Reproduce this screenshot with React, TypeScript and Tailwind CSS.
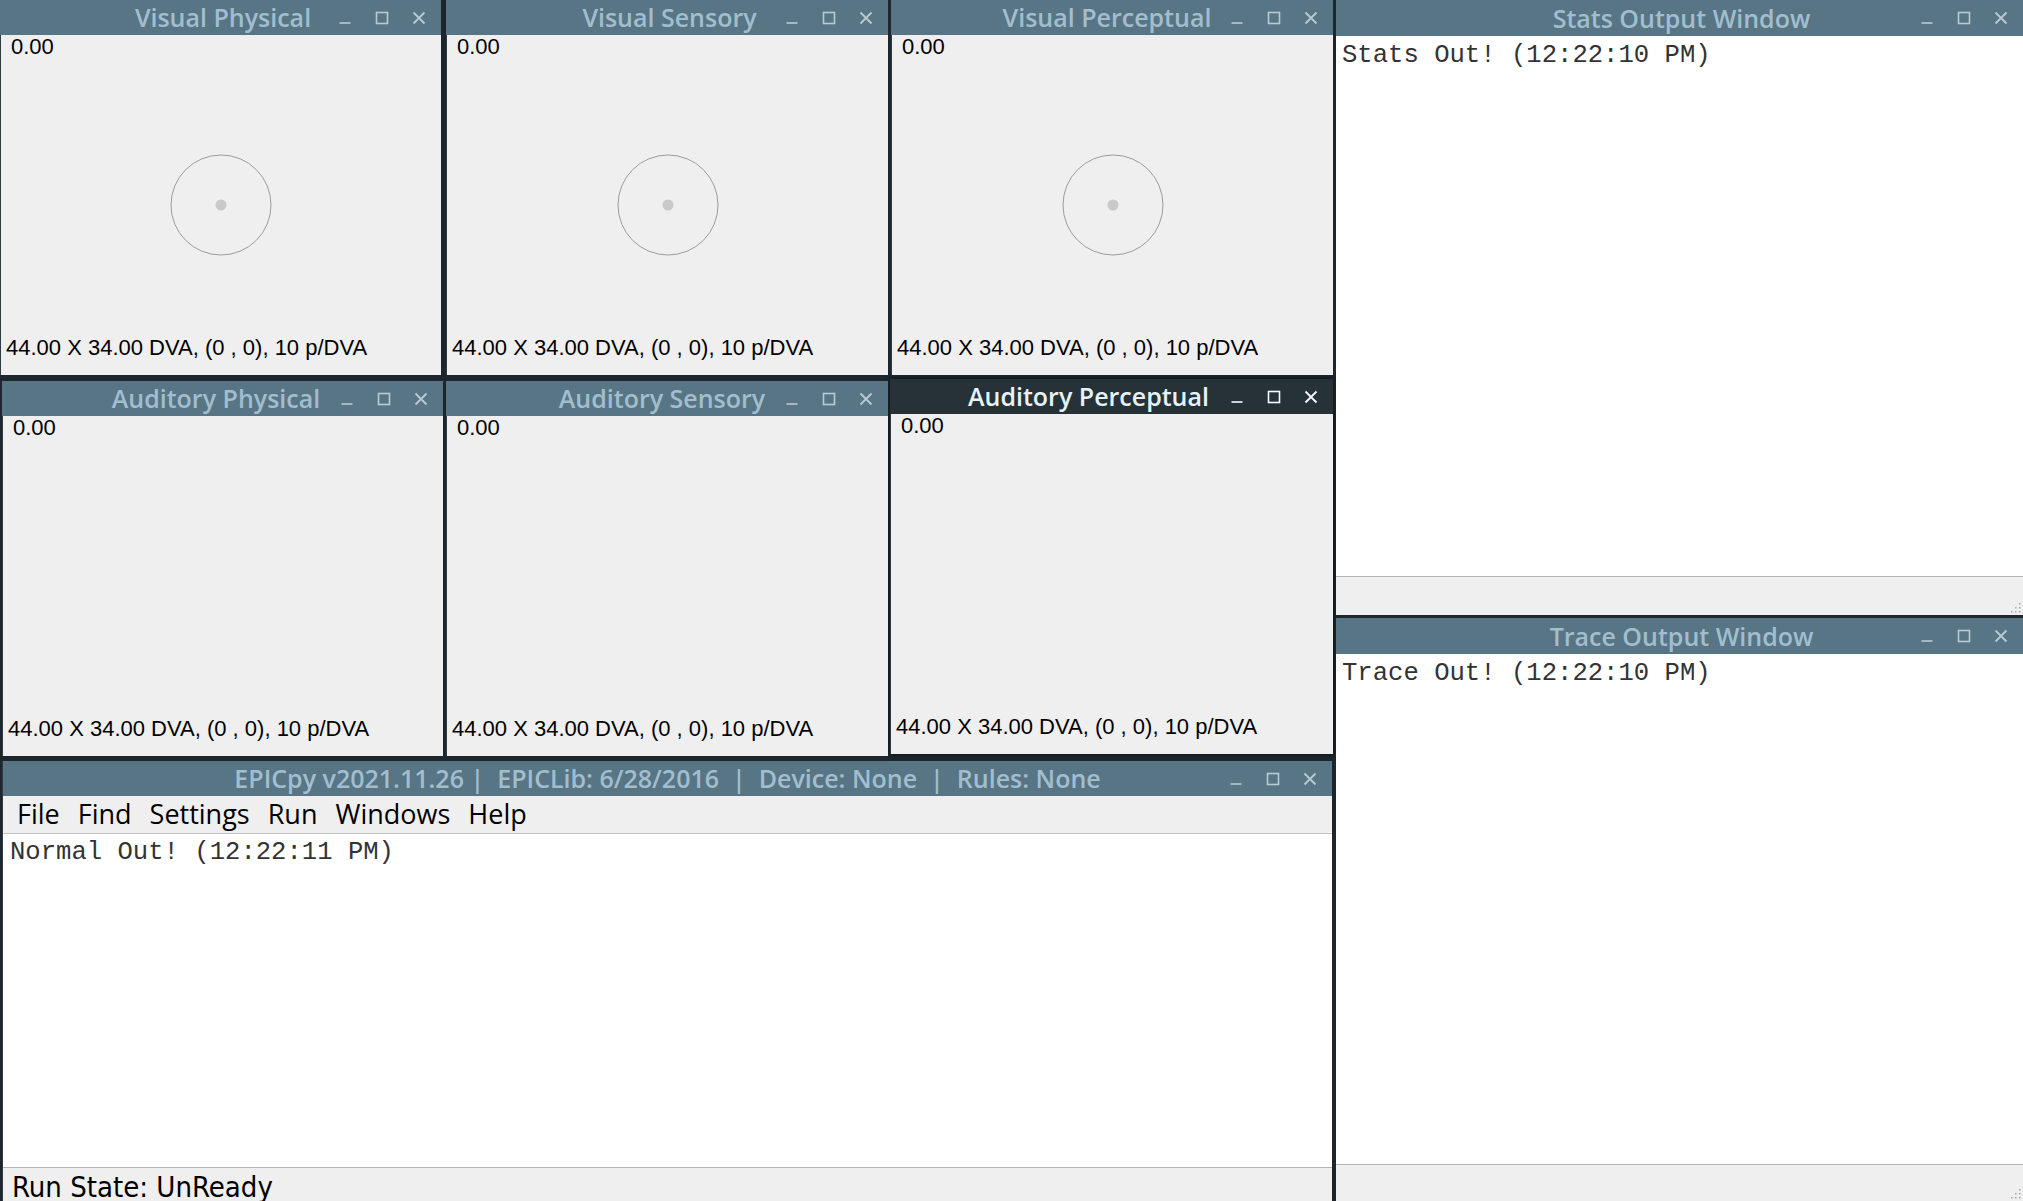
import React from "react";

function TitleButtons({ active }: { active?: boolean }) {
  const c = active ? "#f4fbff" : "#b8cbd5";
  return (
    <div className="absolute right-0 top-0 h-full flex items-center gap-[23px] pr-[15px]">
      <svg width="14" height="14" viewBox="0 0 14 14">
        <line x1="1.5" y1="12" x2="12.5" y2="12" stroke={c} strokeWidth="1.6" />
      </svg>
      <svg width="14" height="14" viewBox="0 0 14 14">
        <rect x="1.5" y="1.5" width="11" height="11" fill="none" stroke={c} strokeWidth="1.6" />
      </svg>
      <svg width="14" height="14" viewBox="0 0 14 14">
        <path d="M1.5 1.5 L12.5 12.5 M12.5 1.5 L1.5 12.5" stroke={c} strokeWidth="1.8" />
      </svg>
    </div>
  );
}

function TitleBar({
  title,
  active,
  h = "h-[35px]",
  shift = "",
}: {
  title: string;
  active?: boolean;
  h?: string;
  shift?: string;
}) {
  return (
    <div
      className={`relative ${h} shrink-0 flex items-center justify-center ${
        active ? "bg-[#263238] text-[#e6f3fb]" : "bg-[#587585] text-[#a2bece]"
      } font-['Open_Sans',sans-serif] font-semibold text-[25px] leading-none whitespace-pre`}
    >
      <span className={shift}>{title}</span>
      <TitleButtons active={active} />
    </div>
  );
}

function Grip() {
  return (
    <svg width="12" height="12" viewBox="0 0 12 12" className="absolute right-[2px] bottom-[2px]">
      {[
        [10, 2],
        [10, 6],
        [6, 6],
        [10, 10],
        [6, 10],
        [2, 10],
      ].map(([x, y], i) => (
        <rect key={i} x={x} y={y} width="1.5" height="1.5" fill="#a8a8a8" />
      ))}
    </svg>
  );
}

function ViewWindow({
  title,
  active,
  circle,
  className,
  shift,
}: {
  title: string;
  active?: boolean;
  circle?: boolean;
  className: string;
  shift?: string;
}) {
  return (
    <div className={`flex flex-col ${className} ${active ? "shadow-[0_0_6px_rgba(0,0,0,0.6)]" : ""}`}>
      <TitleBar title={title} active={active} shift={shift} />
      <div className="relative flex-1 bg-[#efefef] flex flex-col justify-between font-['Liberation_Sans',Arial,sans-serif] text-black border-l border-[#2f3c44]">
        <div className="pl-[10px] text-[22px] leading-[24px]">0.00</div>
        {circle && (
          <div className="absolute inset-0 flex items-center justify-center">
            <svg width="102" height="102" viewBox="0 0 102 102">
              <circle cx="51" cy="51" r="50" fill="none" stroke="#9c9c9c" strokeWidth="1" />
              <circle cx="51" cy="51" r="5.5" fill="#c9c9c9" />
            </svg>
          </div>
        )}
        <div className="pl-[5px] pb-[15px] text-[22px] leading-[24px] whitespace-pre">
          44.00 X 34.00 DVA, (0 , 0), 10 p/DVA
        </div>
      </div>
    </div>
  );
}

function OutputWindow({
  title,
  text,
  className,
  grayH,
}: {
  title: string;
  text: string;
  className: string;
  grayH: string;
}) {
  return (
    <div className={`flex flex-col ${className}`}>
      <TitleBar title={title} h="h-[36px]" shift="ml-[4px]" />
      <div className="flex-1 bg-white border-b border-[#b4b4b4] font-['Liberation_Mono','Courier_New',monospace] text-[25.6px] leading-[30px] text-[#333333] pl-[6px] pt-[5px] whitespace-pre">
        {text}
      </div>
      <div className={`relative ${grayH} shrink-0 bg-[#efefef]`}>
        <Grip />
      </div>
    </div>
  );
}

export default function App() {
  return (
    <div className="w-[2023px] h-[1201px] bg-[#1c262c] flex overflow-hidden">
      {/* Left column */}
      <div className="w-[1333px] shrink-0 flex flex-col">
        <div className="h-[375px] flex gap-0">
          <ViewWindow title="Visual Physical" circle className="w-[441px]" shift="ml-[5px]" />
          <div className="w-[5px]" />
          <ViewWindow title="Visual Sensory" circle className="w-[442px]" shift="ml-[5px]" />
          <div className="w-[3px]" />
          <ViewWindow title="Visual Perceptual" circle className="w-[442px]" shift="mr-[10px]" />
        </div>
        <div className="h-[381px] flex items-end">
          <div className="w-[2px]" />
          <ViewWindow title="Auditory Physical" className="w-[441px] h-[375px]" shift="mr-[13px]" />
          <div className="w-[3px]" />
          <ViewWindow title="Auditory Sensory" className="w-[442px] h-[375px]" shift="mr-[10px]" />
          <div className="w-[2px]" />
          <ViewWindow
            title="Auditory Perceptual"
            active
            className="w-[443px] h-[375px] mb-[2px]"
            shift="mr-[46px]"
          />
        </div>
        {/* Main window */}
        <div className="mt-[5px] ml-[2px] w-[1330px] flex-1 flex flex-col border-l border-[#2f3c44]">
          <TitleBar title={"EPICpy v2021.11.26 |  EPICLib: 6/28/2016  |  Device: None  |  Rules: None"} />
          <div className="h-[38px] shrink-0 bg-[#efefef] border-b border-[#c4c4c4] flex items-center gap-[18px] pl-[14px] font-['Open_Sans',sans-serif] text-[27px] text-black">
            <span>File</span>
            <span>Find</span>
            <span>Settings</span>
            <span>Run</span>
            <span>Windows</span>
            <span>Help</span>
          </div>
          <div className="flex-1 bg-white border-b border-[#b4b4b4] font-['Liberation_Mono','Courier_New',monospace] text-[25.6px] leading-[30px] text-[#333333] pl-[7px] pt-[4px] whitespace-pre">
            Normal Out! (12:22:11 PM)
          </div>
          <div className="relative h-[33px] shrink-0 bg-[#efefef] overflow-hidden">
            <div className="pl-[9px] pt-[2px] font-['DejaVu_Sans_Condensed','Liberation_Sans_Narrow','DejaVu_Sans',sans-serif] [font-stretch:condensed] text-[29px] leading-[34px] text-black whitespace-pre">
              Run State: UnReady
            </div>
          </div>
        </div>
      </div>
      {/* Right column */}
      <div className="ml-[3px] flex-1 flex flex-col">
        <OutputWindow
          title="Stats Output Window"
          text="Stats Out! (12:22:10 PM)"
          className="h-[615px]"
          grayH="h-[38px]"
        />
        <div className="h-[3px]" />
        <OutputWindow
          title="Trace Output Window"
          text="Trace Out! (12:22:10 PM)"
          className="flex-1"
          grayH="h-[36px]"
        />
      </div>
    </div>
  );
}
